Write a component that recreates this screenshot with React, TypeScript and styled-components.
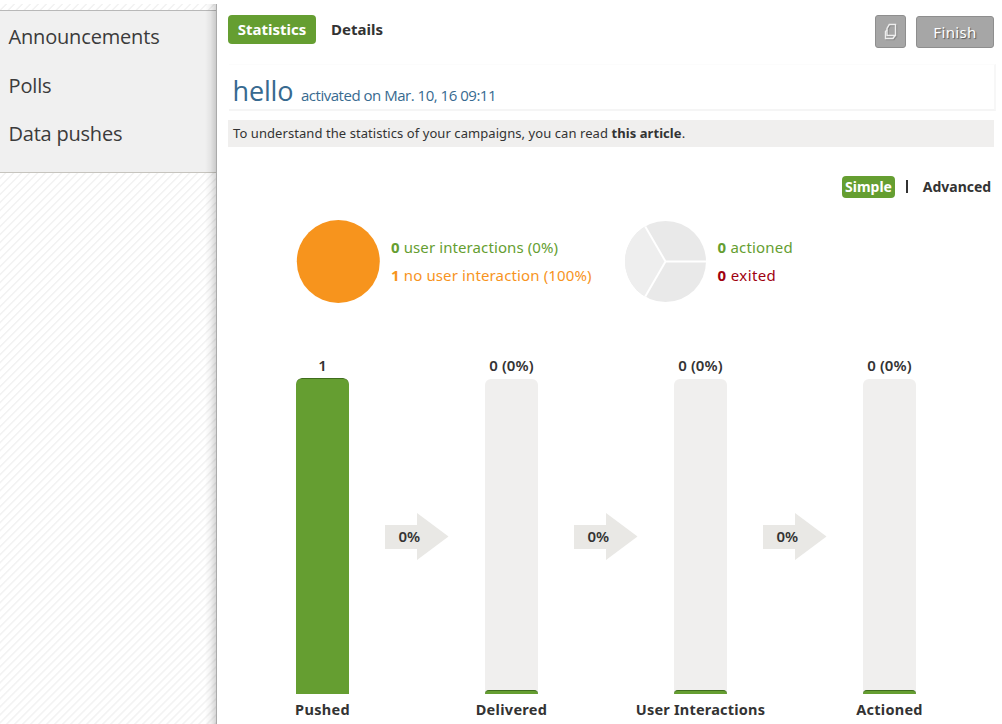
import React from 'react';
import styled, { createGlobalStyle } from 'styled-components';

const Global = createGlobalStyle`
  * { box-sizing: border-box; }
  body { margin: 0; background: #fff; overflow: hidden; color: #333; font-family: "Noto Sans", sans-serif; }
`;
const Page = styled.div`
  display: flex; height: 724px; width: 1002px; overflow: hidden;
`;
const Sidebar = styled.aside`
  position: relative; width: 217px; height: 720px; margin-top: 4px; padding-top: 6px;
  border-right: 1px solid #aaa;
  background: repeating-linear-gradient(135deg, #fff 0 3.4px, #f3f3f3 4.1px 5.1px, #fff 5.66px);
  &::after {
    content: ''; position: absolute; top: 0; right: 0; bottom: 0; width: 11px;
    background: linear-gradient(to right, rgba(0,0,0,0), rgba(0,0,0,.05) 50%, rgba(0,0,0,.16));
  }
`;
const Menu = styled.nav`
  height: 163px; background: #f0f0f0; border-top: 1px solid #b8b8b8; border-bottom: 1px solid #c6c4be;
  padding: 2px 0 0 8.5px;
`;
const MenuItem = styled.a<{ $ls: number }>`
  display: block; height: 48.5px; line-height: 48px; font-size: 20px; white-space: nowrap;
  font-family: "Open Sans", sans-serif; letter-spacing: ${p => p.$ls}px; color: #3b3b3b;
`;
const Main = styled.main`
  width: 785px; padding: 15px 8px 0 11px;
`;
const TopBar = styled.header`
  display: flex; align-items: flex-start; height: 49px;
`;
const Tab = styled.a<{ $active?: boolean }>`
  height: 29px; line-height: 29px; border-radius: 4px; font-size: 15px; font-weight: 700;
  width: ${p => (p.$active ? 88 : 82)}px; text-align: center; white-space: nowrap;
  color: ${p => (p.$active ? '#fff' : '#333')}; background: ${p => (p.$active ? '#659e31' : 'transparent')};
`;
const Actions = styled.div`
  display: flex; align-items: flex-end; gap: 10px; margin-left: auto; height: 33px;
`;
const Button = styled.button<{ $w: number; $h: number }>`
  width: ${p => p.$w}px; height: ${p => p.$h}px; padding: 0; border: 1px solid #8e8e8e; border-radius: 3px;
  background: #a6a6a6; color: #fff; font: 15px/30px "Noto Sans", sans-serif; letter-spacing: .35px;
  text-shadow: 1px 1px 1px #555;
  svg { display: block; margin: 0 auto; filter: drop-shadow(1px 1px 0 #888); }
`;
const Title = styled.div`
  height: 47px; margin: 0 -2px 0 1px; padding-left: 3.5px; border-right: 2px solid #f7f7f7; border-bottom: 2px solid #f5f5f5;
  border-top: 1px solid #fcfcfc;
  display: flex; align-items: baseline; color: #376a90; white-space: nowrap;
  font-family: "Open Sans", sans-serif; line-height: 51px;
`;
const Name = styled.h1`
  margin: 0; font-size: 27px; font-weight: 400; width: 68.5px; letter-spacing: -.15px;
`;
const Activated = styled.span`
  font-size: 15px; letter-spacing: -.48px;
`;
const Note = styled.p`
  margin: 9px 0 0; height: 27px; line-height: 26px; padding-left: 5px; background: #f0efee; font-size: 13px; white-space: nowrap;
  letter-spacing: .07px;
`;
const Mode = styled.div`
  display: flex; justify-content: flex-end; align-items: center; height: 22px; margin-top: 29px; font-size: 14px; font-weight: 700;
`;
const ModeItem = styled.span<{ $active?: boolean }>`
  width: ${p => (p.$active ? 53 : 74)}px; height: 22px; line-height: 21px; border-radius: 4px; text-align: center; white-space: nowrap;
  color: ${p => (p.$active ? '#fff' : '#333')}; background: ${p => (p.$active ? '#659e31' : 'transparent')};
`;
const Divider = styled.i`
  width: 2px; height: 13px; margin: 0 12px 2px 11px; background: #333;
`;
const Pies = styled.section`
  display: flex; height: 84px; margin: 22px 0 0 68px;
`;
const Pie = styled.div<{ $w: number }>`
  display: flex; width: ${p => p.$w}px;
  svg { flex: none; display: block; }
`;
const Legend = styled.div<{ $left: number }>`
  padding-top: 13px; margin-left: ${p => p.$left}px; font-size: 15px; line-height: 28px; white-space: nowrap;
`;
const LegendRow = styled.div<{ $color: string; $ls?: number }>`
  color: ${p => p.$color}; letter-spacing: ${p => p.$ls ?? 0}px;
`;
const Funnel = styled.section`
  display: flex; margin: 51px 0 0 21px;
`;
const Stage = styled.div`
  display: flex; flex-direction: column; align-items: center; width: 147px; flex: none;
`;
const Count = styled.div`
  height: 23px; line-height: 20px; font-size: 15px; font-weight: 600; white-space: nowrap; letter-spacing: .1px;
`;
const Track = styled.div<{ $full: boolean }>`
  display: flex; align-items: flex-end; width: 53px; height: ${p => (p.$full ? 316 : 315)}px;
  margin-top: ${p => (p.$full ? 0 : 1)}px; border-radius: 6px 6px 0 0; background: #f0efee; overflow: hidden;
`;
const Fill = styled.div`
  width: 53px; border-radius: 6px 6px 0 0; background: #659e31; border-top: 1px solid #3f6d1d;
`;
const Label = styled.div<{ $ls: number }>`
  line-height: 30px; font-size: 14.5px; font-weight: 700; white-space: nowrap; letter-spacing: ${p => p.$ls}px;
`;
const Arrow = styled.div`
  display: grid; width: 64px; height: 47px; margin: 158px -11px 0; flex: none; z-index: 1;
  > * { grid-area: 1 / 1; }
  span { line-height: 46px; padding-left: 13.5px; font-size: 15px; font-weight: 600; }
`;

const stages = [
  { label: 'Pushed', count: '1', fill: 316, ls: 0.3 },
  { label: 'Delivered', count: '0 (0%)', fill: 4, ls: 0.3 },
  { label: 'User Interactions', count: '0 (0%)', fill: 4, ls: 0.2 },
  { label: 'Actioned', count: '0 (0%)', fill: 4, ls: 0.25 },
];

export default function App() {
  return (
    <>
      <Global />
      <Page>
        <Sidebar>
          <Menu>
            <MenuItem $ls={-0.17}>Announcements</MenuItem>
            <MenuItem $ls={-0.15}>Polls</MenuItem>
            <MenuItem $ls={-0.22}>Data pushes</MenuItem>
          </Menu>
        </Sidebar>
        <Main>
          <TopBar>
            <Tab $active>Statistics</Tab>
            <Tab>Details</Tab>
            <Actions>
              <Button $w={31} $h={33} aria-label="Copy">
                <svg width="14" height="18" viewBox="0 0 14 18" fill="none" stroke="#eee" strokeWidth="1.4">
                  <path d="M5.3 1.5H11.5V12.5H3V5.5Z" />
                  <path d="M3 7L1.5 8.5V15.5H9L11 12.5" />
                </svg>
              </Button>
              <Button $w={78} $h={32}>Finish</Button>
            </Actions>
          </TopBar>
          <Title>
            <Name>hello</Name>
            <Activated>activated on Mar. 10, 16 09:11</Activated>
          </Title>
          <Note>To understand the statistics of your campaigns, you can read <b>this article</b>.</Note>
          <Mode>
            <ModeItem $active>Simple</ModeItem>
            <Divider />
            <ModeItem>Advanced</ModeItem>
          </Mode>
          <Pies>
            <Pie $w={327}>
              <svg width="84" height="84"><circle cx="42.3" cy="41.5" r="41.5" fill="#f7941d" /></svg>
              <Legend $left={11}>
                <LegendRow $color="#659e31" $ls={0.1}><b>0</b> user interactions (0%)</LegendRow>
                <LegendRow $color="#f7941d" $ls={0.13}><b>1</b> no user interaction (100%)</LegendRow>
              </Legend>
            </Pie>
            <Pie $w={200}>
              <svg width="84" height="84">
                <circle cx="42.5" cy="41.5" r="40.5" fill="#e9e9e9" />
                <path d="M42.5 41.5L22.25 6.43A40.5 40.5 0 0 0 22.25 76.57Z" fill="#eee" />
                <path d="M83 41.5H42.5L22.25 6.43M42.5 41.5L22.25 76.57" stroke="#fff" strokeWidth="2" fill="none" />
              </svg>
              <Legend $left={10.5}>
                <LegendRow $color="#659e31" $ls={0.2}><b>0</b> actioned</LegendRow>
                <LegendRow $color="#a00010" $ls={0.4}><b>0</b> exited</LegendRow>
              </Legend>
            </Pie>
          </Pies>
          <Funnel>
            {stages.map((s, i) => (
              <React.Fragment key={s.label}>
                {i > 0 && (
                  <Arrow>
                    <svg width="64" height="47"><path d="M0 12H32V0L63.5 23.5L32 47V36H0Z" fill="#e9e8e5" /></svg>
                    <span>0%</span>
                  </Arrow>
                )}
                <Stage>
                  <Count>{s.count}</Count>
                  <Track $full={i === 0}><Fill style={{ height: s.fill }} /></Track>
                  <Label $ls={s.ls}>{s.label}</Label>
                </Stage>
              </React.Fragment>
            ))}
          </Funnel>
        </Main>
      </Page>
    </>
  );
}
